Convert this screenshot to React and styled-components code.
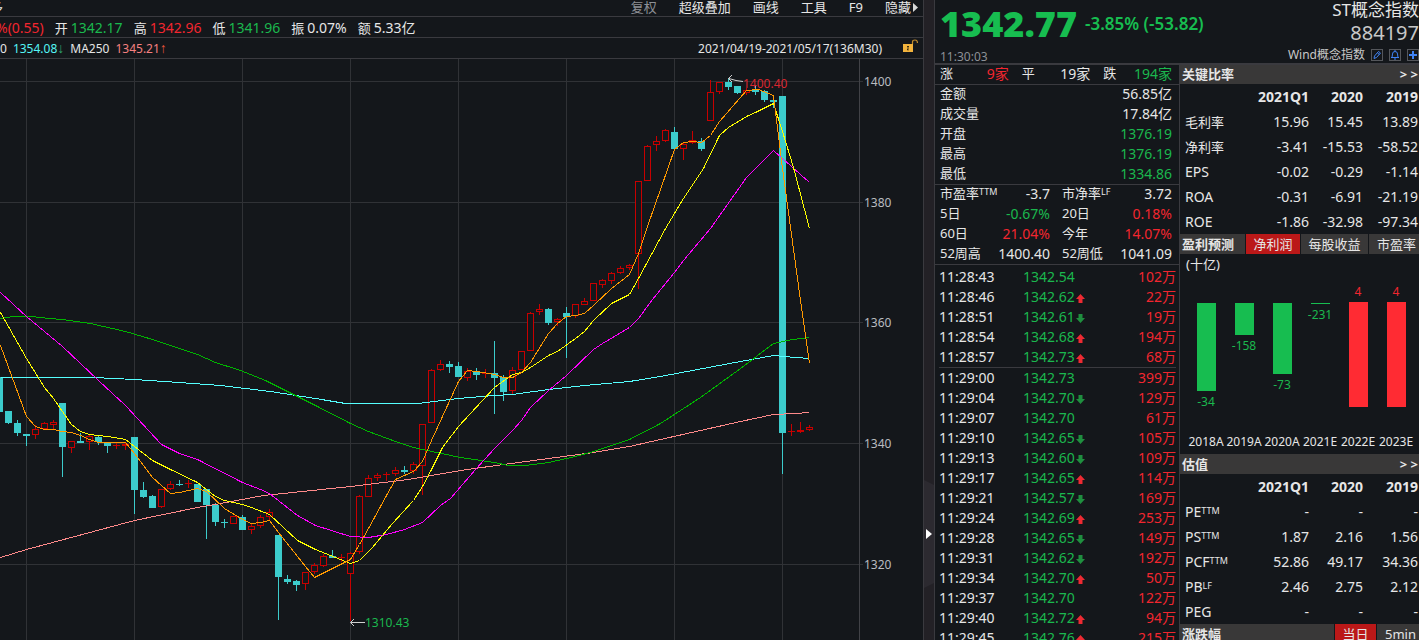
import React, { useState } from 'react';
import styled, { createGlobalStyle, css } from 'styled-components';

const red = '#f2262f';
const green = '#1bb84e';
const line = '#3a3a3f';
const ink = '#e6e6e6';

const GlobalStyle = createGlobalStyle`
  * { box-sizing: border-box; }
  body {
    margin: 0;
    background: #14171b;
    color: ${ink};
    font: 14px/20px "Noto Sans", "Noto Sans CJK SC", sans-serif;
    overflow: hidden;
  }
  button {
    margin: 0;
    padding: 0;
    border: 0;
    background: none;
    color: inherit;
    font: inherit;
    white-space: nowrap;
    cursor: pointer;
  }
  table { border-collapse: collapse; table-layout: fixed; width: 100%; }
  td, th { padding: 0; white-space: nowrap; }
`;

const tones = { up: red, down: green, muted: '#8d9096' };

const Page = styled.main`
  display: flex;
  height: 100vh;
  overflow: hidden;
`;

const ChartPanel = styled.section`
  flex: 1;
  min-width: 0;
  overflow: hidden;
`;

const Toolbar = styled.nav`
  display: flex;
  align-items: flex-start;
  gap: 22px;
  height: 17px;
  padding-right: 5px;
  border-bottom: 1px solid ${line};
  font-size: 13px;
  line-height: 14px;
`;

const ToolButton = styled.button`
  display: flex;
  align-items: center;
  gap: 2px;
  color: ${p => (p.$muted ? tones.muted : ink)};
`;

const CutButton = styled(ToolButton)`
  margin: 0 auto 0 -10px;
`;

const InfoRow = styled.div`
  display: flex;
  align-items: center;
  gap: 11px;
  height: 21px;
  padding-top: 1px;
  border-bottom: 1px solid ${line};
  overflow: hidden;
`;

const Pair = styled.span`
  display: flex;
  gap: 3px;
  color: ${p => tones[p.$tone] || ink};
  white-space: nowrap;
`;

const Change = styled(Pair)`
  margin-left: -4px;
`;

const Label = styled.span`
  color: ${ink};
  font-size: 13px;
`;

const MaRow = styled(InfoRow)`
  gap: 6px;
  padding-right: 5px;
  font-size: 12px;
`;

const MaValue = styled.span`
  color: ${p => p.$color};
`;

const Arrow = styled.span`
  color: ${p => p.$color};
  font-family: "Liberation Sans", sans-serif;
  font-size: 14px;
`;

const DateRange = styled.span`
  margin-left: auto;
  padding-right: 15px;
`;

const ChartSvg = styled.svg`
  display: block;
  width: 100%;
  font-size: 12px;
`;

const Handle = styled.div`
  width: 12px;
  flex: none;
  background: #232126;
  border: solid ${line};
  border-width: 0 1px;
`;

const HandleButton = styled.button`
  display: flex;
  align-items: center;
  justify-content: center;
  width: 10px;
  height: 108px;
  margin-top: 480px;
  background: #2c2a30;
  clip-path: polygon(0 0, 100% 5px, 100% 103px, 0 100%);
`;

const QuotePanel = styled.aside`
  display: flex;
  flex-direction: column;
  width: 484px;
  flex: none;
`;

const QuoteHeader = styled.header`
  display: flex;
  justify-content: space-between;
  height: 65px;
  padding-left: 5px;
  border-bottom: 2px solid ${line};
`;

const PriceBlock = styled.div`
  padding-top: 4px;
`;

const PriceLine = styled.div`
  display: flex;
  align-items: center;
  gap: 8px;
  color: #17bd50;
  font-size: 17px;
  font-weight: 600;
`;

const Price = styled.strong`
  font-size: 36px;
  line-height: 40px;
`;

const Time = styled.time`
  display: block;
  padding-top: 3px;
  color: #8d9096;
  font-size: 12px;
`;

const NameBlock = styled.div`
  display: flex;
  flex-direction: column;
  align-items: flex-end;
`;

const IndexName = styled.h1`
  margin: 0;
  font-size: 17px;
  font-weight: 400;
  line-height: 20px;
`;

const Code = styled.span`
  color: #c8c8c8;
  font-size: 20px;
  line-height: 26px;
`;

const Source = styled.div`
  display: flex;
  align-items: center;
  gap: 6px;
  color: #c8c8c8;
  font-size: 12px;
  line-height: 18px;
`;

const IconButton = styled.button`
  display: flex;
  width: 12px;
  height: 12px;
  border: 1px solid #55575c;
  color: #3f83f5;
`;

const Columns = styled.div`
  display: grid;
  grid-template-columns: 245px 1fr;
  flex: 1;
  min-height: 0;
`;

const Middle = styled.div`
  border-right: 1px solid ${line};
  overflow: hidden;
`;

const Block = styled.div`
  padding: 0 7px 0 5px;
  border-bottom: 1px solid ${line};
`;

const Breadth = styled(Block)`
  display: flex;
  gap: 13px;
  height: 20px;
  line-height: 17px;
`;

const Count = styled(Pair)`
  flex: 1;
  justify-content: space-between;
`;

const Num = styled.td`
  color: ${p => tones[p.$tone] || ink};
  text-align: ${p => (p.$left ? 'left' : 'right')};
`;

const StatTable = styled.table`
  th {
    font-size: 13px;
    font-weight: 400;
    text-align: left;
  }
  th, td { vertical-align: top; }
  tr { height: 20px; line-height: 17px; }
  tr:last-child { height: 19px; }
  td + th { padding-left: 12px; }
`;

const Sup = styled.span`
  position: relative;
  top: -3px;
  font-size: 9px;
  line-height: 9px;
`;

const TickWrap = styled.div`
  padding: 2px 3px 0 4px;
`;

const TickRow = styled.tr`
  height: 20px;
  ${p => p.$last && css`border-bottom: 1px solid ${line};`}
  svg {
    margin-left: 1px;
    vertical-align: -1px;
  }
`;

const SectionHead = styled.header`
  display: flex;
  align-items: stretch;
  gap: 1px;
  height: ${p => p.$height || 20}px;
  line-height: ${p => p.$height || 20}px;
  background: #14171b;
  overflow: hidden;
`;

const SectionTitle = styled.h2`
  flex: 1;
  margin: 0;
  padding-left: 2px;
  background: #393838;
  font-size: 13px;
  line-height: inherit;
  white-space: nowrap;
`;

const More = styled.button`
  margin-left: -1px;
  padding-right: 1px;
  background: #393838;
  font-size: 13px;
  font-weight: 700;
`;

const Tab = styled.button`
  width: ${p => p.$width}px;
  background: ${p => (p.$active ? '#bb1818' : '#393838')};
  font-size: 13px;
  &:last-child { padding-left: 5px; }
`;

const RatioTable = styled.table`
  tr { height: 25px; }
  th { font-weight: 400; text-align: left; }
  thead th { font-weight: 700; text-align: right; }
  tbody th { padding-left: 5px; }
  td:last-child, thead th:last-child { padding-right: 1px; }
`;

const RowLabel = styled.th`
  font-size: ${p => (p.$cjk ? 13 : 14)}px;
`;

const Unit = styled.div`
  padding-left: 6px;
  font-size: 13px;
`;

const Bars = styled.div`
  display: grid;
  grid-template-columns: repeat(6, 1fr);
  height: 180px;
  padding: 0 4px 0 7px;
  font-size: 12px;
`;

const BarColumn = styled.div`
  display: flex;
  flex-direction: column;
  align-items: center;
  padding-top: ${p => (p.$up ? 8 : 29)}px;
  color: ${p => (p.$up ? red : green)};
`;

const Bar = styled.div`
  width: 19px;
  margin-bottom: 1px;
  background: ${p => (p.$up ? '#ff2b33' : '#17bd50')};
`;

const Year = styled.span`
  margin-top: auto;
  padding-bottom: 2px;
  color: ${ink};
`;

// one candle per 9px: [open/close top, bottom, high, low, rising]
const candles = [
  [377, 412, 377, 412, 0], [411, 423, 411, 424, 0], [423, 433, 420, 436, 0],
  [434, 436, 434, 446, 0], [429, 435, 425, 439, 1], [423, 429, 422, 429, 1],
  [422, 425, 420, 429, 1], [403, 447, 403, 477, 0], [441, 448, 441, 453, 1],
  [441, 443, 433, 443, 0], [436, 442, 435, 450, 1], [437, 442, 436, 445, 0],
  [442, 446, 442, 453, 0], [445, 446, 443, 449, 1], [444, 446, 442, 450, 1],
  [437, 490, 437, 514, 0], [490, 497, 482, 498, 0], [496, 508, 495, 508, 0],
  [489, 507, 489, 508, 1], [484, 489, 481, 490, 1], [484, 485, 480, 486, 0],
  [483, 484, 480, 488, 1], [484, 502, 484, 502, 0], [489, 505, 489, 539, 0],
  [505, 522, 503, 526, 0], [522, 523, 519, 528, 0], [516, 524, 516, 524, 1],
  [517, 530, 515, 530, 0], [526, 530, 524, 534, 1], [517, 526, 515, 528, 1],
  [512, 517, 509, 520, 1], [535, 577, 535, 620, 0], [579, 582, 575, 584, 0],
  [581, 585, 580, 591, 0], [572, 584, 572, 590, 1], [565, 572, 563, 574, 1],
  [556, 566, 554, 567, 1], [556, 558, 550, 558, 0], [557, 558, 554, 562, 1],
  [553, 574, 552, 621, 1], [496, 552, 495, 554, 1], [478, 497, 475, 497, 1],
  [475, 478, 473, 481, 1], [474, 475, 472, 481, 1], [470, 474, 467, 476, 1],
  [470, 472, 466, 474, 0], [464, 471, 462, 474, 1], [424, 466, 424, 495, 1],
  [370, 423, 369, 423, 1], [364, 370, 360, 371, 1], [364, 367, 361, 373, 0],
  [366, 377, 362, 377, 0], [371, 378, 368, 381, 1], [372, 375, 368, 380, 0],
  [373, 374, 369, 378, 1], [373, 378, 341, 414, 0], [377, 392, 375, 401, 0],
  [370, 391, 367, 394, 1], [351, 370, 351, 370, 1], [313, 351, 312, 351, 1],
  [309, 312, 304, 315, 1], [309, 323, 308, 325, 0], [319, 322, 318, 326, 1],
  [313, 317, 307, 358, 0], [304, 316, 304, 318, 1], [301, 305, 298, 305, 1],
  [283, 301, 283, 301, 1], [280, 285, 279, 288, 1], [273, 281, 272, 284, 1],
  [268, 273, 266, 274, 1], [265, 268, 264, 270, 1], [181, 254, 181, 289, 1],
  [146, 181, 145, 181, 1], [141, 145, 136, 151, 1], [130, 141, 129, 142, 1],
  [132, 149, 127, 149, 0], [144, 149, 142, 160, 1], [140, 143, 131, 144, 1],
  [141, 149, 138, 151, 0], [92, 121, 80, 121, 1], [82, 92, 82, 94, 1],
  [82, 87, 78, 90, 0], [86, 93, 86, 94, 0], [90, 93, 88, 95, 1],
  [89, 92, 86, 95, 0], [91, 100, 90, 102, 0], [100, 102, 99, 108, 0],
  [96, 433, 96, 474, 0], [431, 432, 424, 436, 1], [430, 432, 422, 433, 1],
  [427, 430, 425, 431, 1],
];

const averages = [
  { color: '#ff8a8a', points: '0,557 26,549 134,520 197,507 220,503 263,495 350,486 408,479 460,470 503,464 548,458 593,452 629,446 660,439 740,421 773,414 795,413 809,412' },
  { color: '#55ffff', points: '0,377 93,377 134,379 179,382 220,385 270,391 315,398 345,403 418,403 458,398 494,395 512,394 548,389 584,385 629,381 660,376 740,361 773,355 795,357 809,358' },
  { color: '#00b400', points: '0,318 13,316 31,316 49,318 62,319 90,323 125,331 152,339 197,354 215,362 240,370 265,380 315,405 350,423 368,431 395,441 413,447 422,449 460,457 494,462 508,465 525,465 548,462 575,456 593,451 629,439 660,423 700,397 740,368 773,343 792,339 809,337' },
  { color: '#ff00ff', points: '0,292 26,316 62,346 98,380 125,405 161,444 179,453 197,459 242,482 260,489 269,493 297,515 315,525 350,536 368,537 386,534 404,529 422,522 440,505 450,498 475,469 494,448 512,430 521,420 530,407 548,390 566,375 593,349 602,343 629,327 638,318 652,299 674,272 683,260 710,228 746,177 773,150 809,182' },
  { color: '#ffff00', points: '0,312 26,358 44,387 53,398 62,411 71,424 80,431 89,434 107,436 125,439 134,446 143,453 152,460 170,469 197,482 215,496 224,500 242,504 251,507 269,514 297,540 315,549 350,563 359,560 372,547 392,523 413,500 422,486 431,469 442,447 458,426 494,387 512,374 521,372 530,367 548,355 557,351 575,338 584,331 593,320 611,303 629,294 638,278 665,228 683,198 703,168 719,135 728,127 746,116 755,112 773,103 782,131 793,167 809,228' },
  { color: '#ff9900', points: '0,345 26,416 35,426 44,429 53,429 62,431 71,432 80,435 89,439 98,442 125,442 134,453 152,477 170,493 179,492 197,488 206,491 224,508 242,519 251,523 260,522 269,520 278,532 305,566 314,577 350,559 359,544 368,528 386,495 395,479 404,475 413,471 422,461 431,440 458,381 467,370 476,371 494,374 503,377 512,377 521,372 530,362 548,333 557,323 566,316 575,315 584,313 593,305 611,288 629,274 638,253 647,226 674,149 683,142 692,141 701,142 710,135 719,121 746,90 758,89 773,95 782,168 800,300 809,363' },
];

const gridX = [26, 134, 242, 350, 458, 566, 674, 782];
const gridY = [[81, 1400], [202, 1380], [322, 1360], [443, 1340], [564, 1320]];

const Candle = ({ x, data }) => {
  const [top, bottom, high, low, rising] = data;
  if (!rising) {
    return (
      <g fill="#3ccccc">
        <rect x={x} y={high} width="1" height={low - high} />
        <rect x={x - 3} y={top} width="7" height={bottom - top} />
      </g>
    );
  }
  return (
    <g fill="#c80000">
      <rect x={x} y={high} width="1" height={low - high} />
      <rect x={x - 3} y={top} width="7" height={bottom - top} />
      {bottom - top > 2 && (
        <rect x={x - 2} y={top + 1} width="5" height={bottom - top - 2} fill="#14171b" />
      )}
    </g>
  );
};

const CandleChart = () => (
  <ChartSvg viewBox="0 59 923 581" preserveAspectRatio="xMinYMin meet" role="img" aria-label="K线图">
    <g fill="#303236" shapeRendering="crispEdges">
      {gridX.map(x => <rect key={x} x={x} y="59" width="1" height="581" />)}
      {gridY.map(([y]) => <rect key={y} x="0" y={y} width="863" height="1" />)}
      <rect x="859" y="59" width="1" height="581" fill="#414247" />
    </g>
    <g shapeRendering="crispEdges">
      {candles.map((c, i) => <Candle key={i} x={i * 9 - 1} data={c} />)}
    </g>
    <g fill="none" shapeRendering="crispEdges" transform="translate(0.5 0.5)">
      {averages.map(a => <polyline key={a.color} points={a.points} stroke={a.color} />)}
    </g>
    <g fill="#b9bcc0">
      {gridY.map(([y, v]) => <text key={v} x="864" y={y + 5}>{v}</text>)}
    </g>
    <g fill="none" stroke="#d0d0d0">
      <path d="M743 81.5 L736 80.5 L729 78.5 M732 75 L728.5 78.5 L732 82" />
      <path d="M365 622.5 H351 M354 619 L350.5 622.5 L354 626" />
    </g>
    <text x="743" y="88" fill="#d8262f">1400.40</text>
    <text x="365" y="627" fill={green}>1310.43</text>
  </ChartSvg>
);

const LockIcon = () => (
  <svg width="15" height="14" viewBox="0 0 15 14" fill="none" aria-hidden="true">
    <rect x="0" y="5" width="10" height="8" fill="#f2b33d" />
    <path d="M9.5 5 V3 Q9.5 1 12 1 Q14.5 1 14.5 4" stroke="#c08a2c" strokeWidth="1.2" />
    <path d="M4 7.5 h2 M5 7.5 v4 M4 10.5 h1" stroke="#3a2c10" />
  </svg>
);

const TickArrow = ({ dir }) => (
  <svg width="9" height="9" viewBox="0 0 9 9" role="img" aria-label={dir === 'u' ? '升' : '降'}>
    {dir === 'u'
      ? <path d="M4.5 0 L9 5 H6.5 V9 H2.5 V5 H0 Z" fill="#ee2a32" />
      : <path d="M4.5 9 L9 4 H6.5 V0 H2.5 V4 H0 Z" fill="#1f8f3f" />}
  </svg>
);

const stats = [
  ['金额', '56.85亿'],
  ['成交量', '17.84亿'],
  ['开盘', '1376.19', 'down'],
  ['最高', '1376.19', 'down'],
  ['最低', '1334.86', 'down'],
];

const pairs = [
  [['市盈率', '-3.7', '', 'TTM'], ['市净率', '3.72', '', 'LF']],
  [['5日', '-0.67%', 'down'], ['20日', '0.18%', 'up']],
  [['60日', '21.04%', 'up'], ['今年', '14.07%', 'up']],
  [['52周高', '1400.40'], ['52周低', '1041.09']],
];

const ticks = [
  ['11:28:43', '1342.54', '', '102万'],
  ['11:28:46', '1342.62', 'u', '22万'],
  ['11:28:51', '1342.61', 'd', '19万'],
  ['11:28:54', '1342.68', 'u', '194万'],
  ['11:28:57', '1342.73', 'u', '68万'],
  ['11:29:00', '1342.73', '', '399万'],
  ['11:29:04', '1342.70', 'd', '129万'],
  ['11:29:07', '1342.70', '', '61万'],
  ['11:29:10', '1342.65', 'd', '105万'],
  ['11:29:13', '1342.60', 'd', '109万'],
  ['11:29:17', '1342.65', 'u', '114万'],
  ['11:29:21', '1342.57', 'd', '169万'],
  ['11:29:24', '1342.69', 'u', '253万'],
  ['11:29:28', '1342.65', 'd', '149万'],
  ['11:29:31', '1342.62', 'd', '192万'],
  ['11:29:34', '1342.70', 'u', '50万'],
  ['11:29:37', '1342.70', '', '122万'],
  ['11:29:40', '1342.72', 'u', '94万'],
  ['11:29:45', '1342.76', 'u', '215万'],
];

const keyRatios = [
  ['毛利率', '', '15.96', '15.45', '13.89'],
  ['净利率', '', '-3.41', '-15.53', '-58.52'],
  ['EPS', '', '-0.02', '-0.29', '-1.14'],
  ['ROA', '', '-0.31', '-6.91', '-21.19'],
  ['ROE', '', '-1.86', '-32.98', '-97.34'],
];

const valuation = [
  ['PE', 'TTM', '-', '-', '-'],
  ['PS', 'TTM', '1.87', '2.16', '1.56'],
  ['PCF', 'TTM', '52.86', '49.17', '34.36'],
  ['PB', 'LF', '2.46', '2.75', '2.12'],
  ['PEG', '', '-', '-', '-'],
];

const forecast = [
  ['2018A', -34, 88],
  ['2019A', -158, 32],
  ['2020A', -73, 71],
  ['2021E', -231, 1],
  ['2022E', 4, 105],
  ['2023E', 4, 105],
];

const Ratios = ({ rows }) => (
  <RatioTable>
    <colgroup>
      <col />
      <col width="64" />
      <col width="54" />
      <col width="56" />
    </colgroup>
    <thead>
      <tr>
        <td />
        <th scope="col">2021Q1</th>
        <th scope="col">2020</th>
        <th scope="col">2019</th>
      </tr>
    </thead>
    <tbody>
      {rows.map(([name, sup, ...values]) => (
        <tr key={name}>
          <RowLabel scope="row" $cjk={name.endsWith('率')}>{name}{sup && <Sup>{sup}</Sup>}</RowLabel>
          {values.map((v, i) => <Num key={i}>{v}</Num>)}
        </tr>
      ))}
    </tbody>
  </RatioTable>
);

const App = () => {
  const [metric, setMetric] = useState('净利润');
  const [period, setPeriod] = useState('当日');

  return (
    <Page>
      <GlobalStyle />
      <ChartPanel>
        <Toolbar>
          <CutButton type="button">多</CutButton>
          <ToolButton type="button" $muted>复权</ToolButton>
          <ToolButton type="button">超级叠加</ToolButton>
          <ToolButton type="button">画线</ToolButton>
          <ToolButton type="button">工具</ToolButton>
          <ToolButton type="button">F9</ToolButton>
          <ToolButton type="button">
            隐藏
            <svg width="5" height="9" viewBox="0 0 5 9" aria-hidden="true"><path d="M0 0 L5 4.5 L0 9 Z" fill="#d8d8d8" /></svg>
          </ToolButton>
        </Toolbar>
        <InfoRow>
          <Change $tone="up">%(0.55)</Change>
          <Pair $tone="down"><Label>开</Label>1342.17</Pair>
          <Pair $tone="up"><Label>高</Label>1342.96</Pair>
          <Pair $tone="down"><Label>低</Label>1341.96</Pair>
          <Pair><Label>振</Label>0.07%</Pair>
          <Pair><Label>额</Label>5.33亿</Pair>
        </InfoRow>
        <MaRow>
          <span>0</span>
          <MaValue $color="#55f5f5">1354.08<Arrow $color="#2fa56a">↓</Arrow></MaValue>
          <span>MA250</span>
          <MaValue $color="#f58080">1345.21<Arrow $color="#e8563c">↑</Arrow></MaValue>
          <DateRange>2021/04/19-2021/05/17(136M30)</DateRange>
          <button type="button" aria-label="解锁"><LockIcon /></button>
        </MaRow>
        <CandleChart />
      </ChartPanel>

      <Handle>
        <HandleButton type="button" aria-label="收起">
          <svg width="6" height="10" viewBox="0 0 6 10" aria-hidden="true"><path d="M0 0 L6 5 L0 10 Z" fill="#fff" /></svg>
        </HandleButton>
      </Handle>

      <QuotePanel>
        <QuoteHeader>
          <PriceBlock>
            <PriceLine><Price>1342.77</Price><span>-3.85% (-53.82)</span></PriceLine>
            <Time>11:30:03</Time>
          </PriceBlock>
          <NameBlock>
            <IndexName>ST概念指数</IndexName>
            <Code>884197</Code>
            <Source>
              Wind概念指数
              <IconButton type="button" aria-label="编辑">
                <svg width="10" height="10" viewBox="0 0 10 10" fill="none" stroke="currentColor"><path d="M2 8.5 L2.5 6 L6.5 1.5 L8.5 3 L4.5 7.5 Z M5.5 3 L7.5 4.5" /></svg>
              </IconButton>
              <IconButton type="button" aria-label="提醒">
                <svg width="10" height="10" viewBox="0 0 10 10" fill="none" stroke="currentColor"><path d="M1 7.5 H9 M2 7.5 L2.5 4 Q2.5 1.5 5 1.5 Q7.5 1.5 7.5 4 L8 7.5 M4 9 H6 M5 0 V1.5" /></svg>
              </IconButton>
              <IconButton type="button" aria-label="添加">
                <svg width="10" height="10" viewBox="0 0 10 10" stroke="currentColor" strokeWidth="2"><path d="M1 5 H9 M5 1 V9" /></svg>
              </IconButton>
            </Source>
          </NameBlock>
        </QuoteHeader>

        <Columns>
          <Middle>
            <Breadth>
              <Count $tone="up"><Label>涨</Label><span>9家</span></Count>
              <Count><Label>平</Label><span>19家</span></Count>
              <Count $tone="down"><Label>跌</Label><span>194家</span></Count>
            </Breadth>
            <Block>
              <StatTable>
                <tbody>
                  {stats.map(([name, value, tone]) => (
                    <tr key={name}>
                      <th scope="row">{name}</th>
                      <Num $tone={tone}>{value}</Num>
                    </tr>
                  ))}
                </tbody>
              </StatTable>
            </Block>
            <Block>
              <StatTable>
                <colgroup>
                  <col width="58" />
                  <col width="52" />
                  <col width="66" />
                  <col />
                </colgroup>
                <tbody>
                  {pairs.map((row, i) => (
                    <tr key={i}>
                      {row.map(([name, value, tone, sup]) => (
                        <React.Fragment key={name}>
                          <th scope="row">{name}{sup && <Sup>{sup}</Sup>}</th>
                          <Num $tone={tone}>{value}</Num>
                        </React.Fragment>
                      ))}
                    </tr>
                  ))}
                </tbody>
              </StatTable>
            </Block>
            <TickWrap>
              <table>
                <colgroup>
                  <col width="84" />
                  <col width="68" />
                  <col />
                </colgroup>
                <tbody>
                  {ticks.map(([time, price, dir, amount], i) => (
                    <TickRow key={time} $last={i === 4}>
                      <td>{time}</td>
                      <Num $tone="down" $left>{price}{dir && <TickArrow dir={dir} />}</Num>
                      <Num $tone="up">{amount}</Num>
                    </TickRow>
                  ))}
                </tbody>
              </table>
            </TickWrap>
          </Middle>

          <div>
            <SectionHead $height={19}>
              <SectionTitle>关键比率</SectionTitle>
              <More type="button" aria-label="更多关键比率">&gt; &gt;</More>
            </SectionHead>
            <Ratios rows={keyRatios} />
            <SectionHead>
              <SectionTitle>盈利预测</SectionTitle>
              <Tab type="button" $width={54} $active={metric === '净利润'} onClick={() => setMetric('净利润')}>净利润</Tab>
              <Tab type="button" $width={67} $active={metric === '每股收益'} onClick={() => setMetric('每股收益')}>每股收益</Tab>
              <Tab type="button" $width={50} $active={metric === '市盈率'} onClick={() => setMetric('市盈率')}>市盈率</Tab>
            </SectionHead>
            <Unit>(十亿)</Unit>
            <Bars>
              {forecast.map(([year, value, height]) => {
                const up = value > 0;
                return (
                  <BarColumn key={year} $up={up}>
                    {up && <span>{value}</span>}
                    <Bar $up={up} style={{ height }} />
                    {!up && <span>{value}</span>}
                    <Year>{year}</Year>
                  </BarColumn>
                );
              })}
            </Bars>
            <SectionHead>
              <SectionTitle>估值</SectionTitle>
              <More type="button" aria-label="更多估值">&gt; &gt;</More>
            </SectionHead>
            <Ratios rows={valuation} />
            <SectionHead>
              <SectionTitle>涨跌幅</SectionTitle>
              <Tab type="button" $width={41} $active={period === '当日'} onClick={() => setPeriod('当日')}>当日</Tab>
              <Tab type="button" $width={42} $active={period === '5min'} onClick={() => setPeriod('5min')}>5min</Tab>
            </SectionHead>
          </div>
        </Columns>
      </QuotePanel>
    </Page>
  );
};

export default App;
